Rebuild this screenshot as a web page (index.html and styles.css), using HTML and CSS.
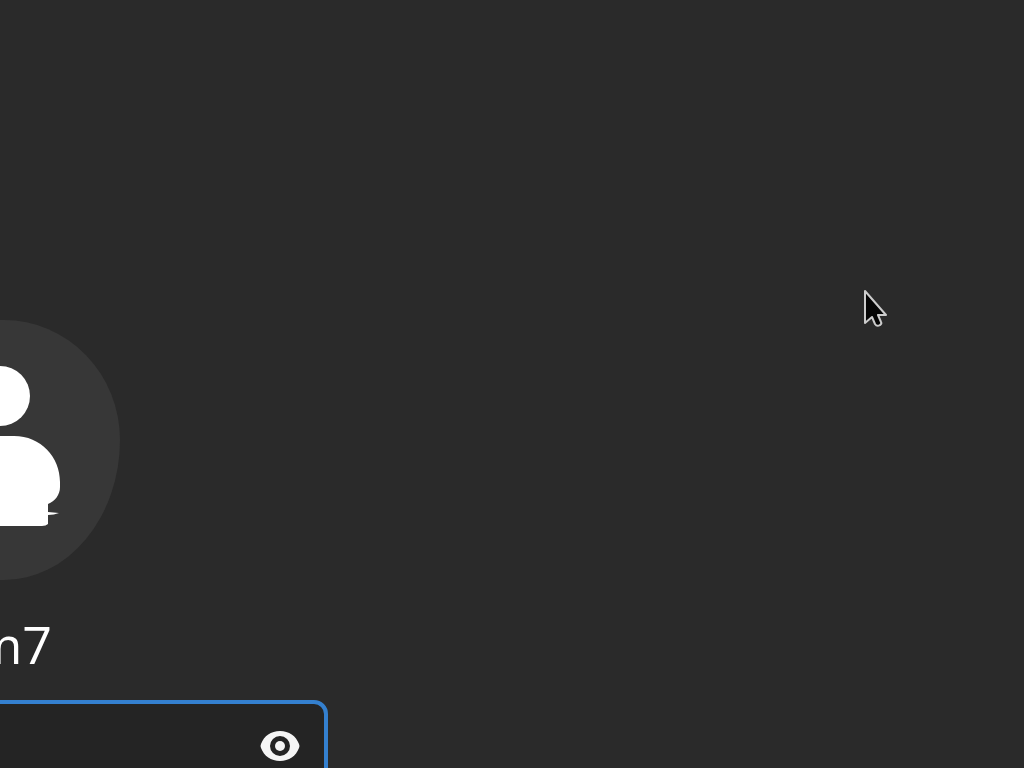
FILE: index.html
```html
<!DOCTYPE html>
<html lang="en">
<head>
<meta charset="utf-8">
<title>Login</title>
<link rel="stylesheet" href="styles.css">
</head>
<body>
<main class="login">
  <div class="avatar">
    <svg class="avatar-icon" viewBox="0 0 120 160" aria-hidden="true">
      <circle cx="60" cy="30" r="30"/>
      <path d="M46 70H74C101 70 120 91 120 116V121C120 129 115 135 108 138V146L119 147Q114 149 108 149V158Q106 160 102 160H18Q0 156 0 138V114C0 91 19 70 46 70Z"/>
    </svg>
  </div>
  <label class="username" for="password">m7</label>
  <div class="field">
    <input class="password" id="password" type="password">
    <button class="reveal" type="button" aria-label="Show password">
      <svg class="eye" viewBox="0 0 40 32" aria-hidden="true">
        <path fill-rule="evenodd" d="M20 1C29 1 36 6 39 14Q40 16 39 18C36 26 29 31 20 31S4 26 1 18Q0 16 1 14C4 6 11 1 20 1ZM20 6A10 10 0 1 0 20 26A10 10 0 1 0 20 6Z"/>
        <circle cx="20" cy="16" r="5"/>
      </svg>
    </button>
  </div>
</main>
<svg class="pointer" viewBox="0 0 26 40" aria-hidden="true">
  <path d="M2 3V35L9 29L12 36Q14 39 17 37Q19 36 18 34L15 27H23Z"/>
</svg>
</body>
</html>
```
FILE: styles.css
```css
body {
  margin: 0;
  min-height: 100vh;
  overflow: hidden;
  background: #2a2a2a;
  color: #fff;
  font-family: "Open Sans", "Noto Sans", sans-serif;
}

.login {
  display: flex;
  flex-direction: column;
  align-items: center;
  width: 656px;
  margin-left: -328px;
  padding-top: 320px;
}

.avatar {
  display: flex;
  justify-content: center;
  box-sizing: border-box;
  width: 240px;
  height: 260px;
  padding-top: 46px;
  border-radius: 116px / 120px 120px 140px 140px;
  background: #373737;
}

.avatar-icon {
  width: 120px;
  height: 160px;
  fill: #fff;
}

.username {
  width: 104px;
  margin: 32px 0 24px;
  font-size: 52px;
  font-weight: 400;
  line-height: 64px;
  text-align: right;
}

.field {
  display: flex;
  align-items: center;
  box-sizing: border-box;
  width: 100%;
  height: 92px;
  padding-right: 24px;
  border: 4px solid #3480cf;
  border-radius: 14px;
  background: #242424;
}

.password {
  flex: 1;
  min-width: 0;
  height: 100%;
  padding: 0 24px;
  border: 0;
  outline: 0;
  background: transparent;
  color: inherit;
  font: inherit;
}

.reveal {
  padding: 0;
  border: 0;
  background: transparent;
}

.eye {
  display: block;
  width: 40px;
  height: 32px;
  fill: #f5f5f5;
}

.pointer {
  position: absolute;
  top: 288px;
  left: 863px;
  width: 26px;
  height: 40px;
  fill: #050505;
  stroke: #ccc;
  stroke-width: 2;
  stroke-linejoin: round;
}
```
